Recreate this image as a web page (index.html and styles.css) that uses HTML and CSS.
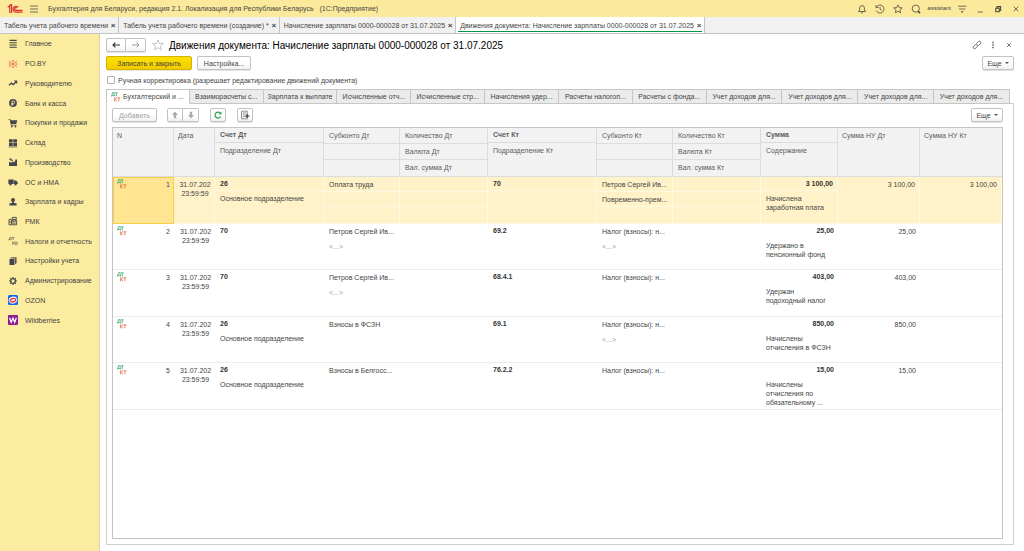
FILE: index.html
```html
<!DOCTYPE html>
<html lang="ru">
<head>
<meta charset="utf-8">
<title>Движения документа: Начисление зарплаты</title>
<link rel="stylesheet" href="styles.css">
</head>
<body>
<svg class="defs" aria-hidden="true">
  <symbol id="dtkt" viewBox="0 0 10 10">
    <path d="M.5 4.5V3.6h.4L1.6.6h1.6v3h.5v.9M.9 3.6h2.3" fill="none" stroke="#3fa873" stroke-width=".8"/>
    <path d="M4 .8h2.6M5.3.8v3.4" fill="none" stroke="#3fa873" stroke-width=".8"/>
    <path d="M3.6 5.4v3.9M6 5.4 4 7.3l2.1 2M6.4 5.8H9.4M7.9 5.8v3.5" fill="none" stroke="#e5683f" stroke-width=".8"/>
  </symbol>
</svg>
<header class="titlebar">
  <svg class="logo" viewBox="0 0 16 10"><g fill="none" stroke="#d9312b" stroke-width="1.2"><path d="M.8 3.4 2.8 1.6V9M4.6 9V.8L2.4 1.2"/><path d="M11.3 3.2A3 3 0 1 0 8.6 8.2H15.5"/><path d="M9.9 4A1.4 1.4 0 1 0 8.7 6.4H15.5"/></g></svg>
  <button class="icon-btn" aria-label="Меню"><svg viewBox="0 0 10 10"><path d="M1 2h8M1 5h8M1 8h8"/></svg></button>
  <h1 class="app-title">Бухгалтерия для Беларуси, редакция 2.1. Локализация для Республики Беларусь &nbsp; (1С:Предприятие)</h1>
  <div class="title-tools">
    <button class="icon-btn" aria-label="Уведомления"><svg viewBox="0 0 10 10"><path d="M1.4 7.5h7.2L7.4 6V4A2.4 2.4 0 0 0 2.6 4v2zM4 8.8h2"/></svg></button>
    <button class="icon-btn" aria-label="История"><svg viewBox="0 0 10 10"><path d="M1.4 3.3A4 4 0 1 1 1.3 6.6M1 1v2.5h2.4M5 2.8V5.2L6.8 6.4"/></svg></button>
    <button class="icon-btn" aria-label="Избранное"><svg viewBox="0 0 10 10"><path d="m5 .9 1.2 2.7 3 .3-2.3 2 .7 2.9L5 7.3 2.4 8.8l.7-2.9-2.3-2 3-.3z"/></svg></button>
    <button class="icon-btn" aria-label="Поиск"><svg viewBox="0 0 10 10"><circle cx="4.8" cy="4.6" r="3.6"/><path d="m7 7 2 2.2" stroke-width="1.6"/></svg></button>
    <span class="user">assistant</span>
    <button class="icon-btn" aria-label="Настройки"><svg viewBox="0 0 10 10"><path d="M1 2.2h8.4M2 5h6.4"/><path d="M3.6 7.2h3L5.1 8.9z" fill="#4d4c3e" stroke="none"/></svg></button>
    <button class="icon-btn" aria-label="Свернуть"><svg viewBox="0 0 10 10"><path d="M2.8 8h5"/></svg></button>
    <button class="icon-btn" aria-label="Восстановить"><svg viewBox="0 0 10 10"><path d="M2.8 4.2h3.4v3.6H2.8zM4 4V2.6h3.6v3.8H6.4" stroke-width="1.1"/></svg></button>
    <button class="icon-btn" aria-label="Закрыть"><svg viewBox="0 0 10 10"><path d="m2.6 2.6 4.8 4.8m0-4.8L2.6 7.4"/></svg></button>
  </div>
</header>
<nav class="window-tabs" aria-label="Окна">
  <div class="wtab"><a href="#">Табель учета рабочего времени</a><button aria-label="Закрыть">×</button></div>
  <div class="wtab"><a href="#">Табель учета рабочего времени (создание) *</a><button aria-label="Закрыть">×</button></div>
  <div class="wtab"><a href="#">Начисление зарплаты 0000-000028 от 31.07.2025</a><button aria-label="Закрыть">×</button></div>
  <div class="wtab wtab-active"><a href="#">Движения документа: Начисление зарплаты 0000-000028 от 31.07.2025</a><button aria-label="Закрыть">×</button></div>
</nav>
<div class="workspace">
  <nav class="sidebar" aria-label="Разделы">
    <ul>
      <li><a href="#"><svg viewBox="0 0 10 10"><path d="M1.5 1.4h7.2M1.5 3.7h7.2M1.5 6h7.2M1.5 8.3h7.2" stroke="#46463f" stroke-width="1.1"/></svg>Главное</a></li>
      <li><a href="#"><svg viewBox="0 0 10 10"><path d="M5 1v2.2M5 6.8V9M1.2 2.2 3.5 4M8.8 2.2 6.5 4M1.2 7.8 3.5 6M8.8 7.8 6.5 6M.6 5h1.8M7.6 5h1.8" stroke="#e2554a"/><circle cx="5" cy="5" r="1" fill="#e2554a"/></svg>PO.BY</a></li>
      <li><a href="#"><svg viewBox="0 0 10 10"><path d="m1 7.3 2.4-2.2 2 1.5L8 3.7" fill="none" stroke="#46464e" stroke-width="1.4"/><path d="M5.8 2.6h3.4V6z" fill="#46464e"/></svg>Руководителю</a></li>
      <li><a href="#"><svg viewBox="0 0 10 10"><circle cx="5" cy="5" r="3.9" fill="#46464e"/><path d="M4.1 7.8V2.9h1.3a1.3 1.3 0 0 1 0 2.7H3.2M3.2 6.7h2.4" fill="none" stroke="#fbec9f" stroke-width=".8"/></svg>Банк и касса</a></li>
      <li><a href="#"><svg viewBox="0 0 10 10"><path d="M.6 1.3h1.7l.5 1H9.3L8.2 6H3.4l.2.8h4.8v.7H2.9L1.8 2H.6z" fill="#46464e"/><circle cx="3.8" cy="8.5" r=".9" fill="#46464e"/><circle cx="7.5" cy="8.5" r=".9" fill="#46464e"/></svg>Покупки и продажи</a></li>
      <li><a href="#"><svg viewBox="0 0 10 10"><path d="M1 1.3h3.7v3.2H1zM5.3 1.3H9v3.2H5.3zM1 5.1h3.7v3.2H1zM5.3 5.1H9v3.2H5.3z" fill="#46464e"/><path d="M.6 9h8.8" stroke="#46464e" stroke-width=".6"/></svg>Склад</a></li>
      <li><a href="#"><svg viewBox="0 0 10 10"><path d="M1 9V4.6l1.8 1.2 2.4-1.6v1.4l2-1.4V2.6H9V9zM1.2 1.4h2.3v1.4H5v1H2.5V2.7H1.2z" fill="#46464e"/></svg>Производство</a></li>
      <li><a href="#"><svg viewBox="0 0 10 10"><path d="M.4 2.4h5.3v4.7H.4zM6.1 3.5h2L9.7 5.3v1.8H6.1z" fill="#46464e"/><circle cx="2.5" cy="7.4" r="1.1" fill="#46464e"/><circle cx="7.6" cy="7.4" r="1.1" fill="#46464e"/></svg>ОС и НМА</a></li>
      <li><a href="#"><svg viewBox="0 0 10 10"><circle cx="5" cy="3" r="2" fill="#46464e"/><path d="M4.1 4.5h1.8v1.2l2.7.9V8.6H1.4v-2l2.7-.9z" fill="#46464e"/></svg>Зарплата и кадры</a></li>
      <li><a href="#"><svg viewBox="0 0 10 10"><path d="M1 3.4h2.4v5.4H1zM4 4.2h4.6v4.6H4zM4.3 1.4h4v2h-4z" fill="none" stroke="#46464e" stroke-width=".9"/><path d="M4.8 5.6h3M4.8 7.2h3M1 6h2.4" stroke="#46464e" stroke-width=".8"/></svg>РМК</a></li>
      <li><a href="#"><svg viewBox="0 0 10 10"><path d="M1 4.2 2 1.4h1.2v2.2M.7 3.7h2.8M4 1.6h2.4M5.2 1.6v2.3M4.6 5.6v3M6.3 5.6 4.8 7l1.6 1.5M6.8 6.2h2.4v2.2H7z" fill="none" stroke="#77735c" stroke-width=".8"/></svg>Налоги и отчетность</a></li>
      <li><a href="#"><svg viewBox="0 0 10 10"><path d="M1.5 3h5v6h-5z" fill="#46464e"/><path d="M2 2.5 3.4 1.2H8.6V7L7 8.6V2.5z" fill="#5c5b59"/></svg>Настройки учета</a></li>
      <li><a href="#"><svg viewBox="0 0 10 10"><circle cx="5" cy="5" r="2.3" fill="none" stroke="#46464e" stroke-width="1.3"/><path d="M5 1v1.5M5 7.5V9M1 5h1.5M7.5 5H9M2.2 2.2l1 1M6.8 6.8l1 1M7.8 2.2l-1 1M3.2 6.8l-1 1" stroke="#46464e" stroke-width="1.2"/></svg>Администрирование</a></li>
      <li><a href="#"><svg viewBox="0 0 10 10"><rect width="10" height="10" rx="1.5" fill="#1766e8"/><ellipse cx="5" cy="5.1" rx="4.3" ry="3.4" fill="#fff" transform="rotate(-15 5 5)"/><ellipse cx="5" cy="5.2" rx="2.8" ry="1.6" fill="none" stroke="#e7343f" stroke-width="1.4" transform="rotate(-15 5 5)"/></svg>OZON</a></li>
      <li><a href="#"><svg viewBox="0 0 10 10"><rect width="10" height="10" rx="1" fill="#8e1b94"/><path d="m1.6 2.8 1.6 4.5L5 3l1.7 4.3 1.7-4.5" fill="none" stroke="#fff" stroke-width="1.2"/></svg>Wildberries</a></li>
    </ul>
  </nav>
  <main class="form">
    <div class="form-head">
      <div class="btn-pair">
        <button class="btn" aria-label="Назад"><svg viewBox="0 0 10 10"><path d="M9 5H2M4.4 2.6 2 5l2.4 2.4" fill="none" stroke="#333" stroke-width="1.2"/></svg></button>
        <button class="btn" aria-label="Вперед"><svg viewBox="0 0 10 10"><path d="M1 5h7M5.6 2.6 8 5 5.6 7.4" fill="none" stroke="#999"/></svg></button>
      </div>
      <button class="star" aria-label="В избранное"><svg viewBox="0 0 12 12"><path d="m6 .8 1.4 3.6 3.9.2-3 2.4 1 3.8L6 8.7l-3.3 2.1 1-3.8-3-2.4 3.9-.2z" fill="none" stroke="#b5b5b5" stroke-width=".8"/></svg></button>
      <h2>Движения документа: Начисление зарплаты 0000-000028 от 31.07.2025</h2>
      <div class="head-tools">
        <button class="icon-btn" aria-label="Ссылка"><svg viewBox="0 0 10 10"><path d="M4.6 3.6 6.4 1.7a1.4 1.4 0 0 1 2 2L6.5 5.5a1.4 1.4 0 0 1-1.9 0M5.4 6.4 3.6 8.3a1.4 1.4 0 0 1-2-2L3.5 4.5a1.4 1.4 0 0 1 1.9 0"/></svg></button>
        <button class="icon-btn" aria-label="Еще"><svg viewBox="0 0 10 10"><path d="M5 1.8v1.5M5 4.3v1.5M5 6.8v1.5" stroke-width="1.3"/></svg></button>
        <button class="icon-btn" aria-label="Закрыть"><svg viewBox="0 0 10 10"><path d="m3.2 3.2 3.6 3.6m0-3.6L3.2 6.8"/></svg></button>
      </div>
    </div>
    <div class="commands">
      <button class="btn btn-primary">Записать и закрыть</button>
      <button class="btn btn-settings">Настройка...</button>
      <button class="btn btn-more">Еще <span class="caret"></span></button>
    </div>
    <label class="manual"><input type="checkbox">Ручная корректировка (разрешает редактирование движений документа)</label>
    <div class="page-tabs" role="tablist">
      <button class="ptab ptab-active" role="tab" aria-selected="true"><svg class="dk"><use href="#dtkt"/></svg>Бухгалтерский и ...</button>
      <button class="ptab" role="tab">Взаиморасчеты с...</button>
      <button class="ptab" role="tab">Зарплата к выплате</button>
      <button class="ptab" role="tab">Исчисленные отч...</button>
      <button class="ptab" role="tab">Исчисленные стр...</button>
      <button class="ptab" role="tab">Начисления удер...</button>
      <button class="ptab" role="tab">Расчеты налогоп...</button>
      <button class="ptab" role="tab">Расчеты с фонда...</button>
      <button class="ptab ptab-wide" role="tab">Учет доходов для...</button>
      <button class="ptab ptab-wide" role="tab">Учет доходов для...</button>
      <button class="ptab ptab-wide" role="tab">Учет доходов для...</button>
      <button class="ptab ptab-wide" role="tab">Учет доходов для...</button>
    </div>
    <section class="pane">
      <div class="pane-tools">
        <button class="btn btn-add" disabled>Добавить</button>
        <div class="btn-pair btn-move">
          <button class="btn" aria-label="Вверх"><svg viewBox="0 0 10 10"><path d="M5 1.5 8 5H6.2v3.2H3.8V5H2z" fill="#a3acb4"/></svg></button>
          <button class="btn" aria-label="Вниз"><svg viewBox="0 0 10 10"><path d="M5 8.5 8 5H6.2V1.8H3.8V5H2z" fill="#a3acb4"/></svg></button>
        </div>
        <button class="btn btn-icon" aria-label="Обновить"><svg viewBox="0 0 10 10"><path d="M7.7 6.5A3 3 0 1 1 7.4 3.2" fill="none" stroke="#2ca24a" stroke-width="1.2"/><path d="M8.5 1.4v3H5.6z" fill="#2ca24a"/></svg></button>
        <button class="btn btn-icon" aria-label="Настройка списка"><svg viewBox="0 0 10 10"><path d="M1.5 1.2h5.8v7.6H1.5zM2.8 3h3.4M2.8 4.8h2M2.8 6.6h2" fill="none" stroke="#777" stroke-width=".8"/><path d="M5 6h4.5M7 4v4" stroke="#333"/></svg></button>
        <button class="btn btn-more">Еще <span class="caret"></span></button>
      </div>
      <div class="grid-box">
        <table>
          <colgroup><col class="c-n"><col class="c-date"><col class="c-acc"><col class="c-sub"><col class="c-qty"><col class="c-acc"><col class="c-sub"><col class="c-qty"><col class="c-sum"><col class="c-nu"><col class="c-nu"></colgroup>
          <thead>
            <tr>
              <th>N</th>
              <th>Дата</th>
              <th class="two"><b>Счет Дт</b><span>Подразделение Дт</span></th>
              <th class="three"><span>Субконто Дт</span><span></span><span></span></th>
              <th class="three"><span>Количество Дт</span><span>Валюта Дт</span><span>Вал. сумма Дт</span></th>
              <th class="two"><b>Счет Кт</b><span>Подразделение Кт</span></th>
              <th class="three"><span>Субконто Кт</span><span></span><span></span></th>
              <th class="three"><span>Количество Кт</span><span>Валюта Кт</span><span>Вал. сумма Кт</span></th>
              <th class="two"><b>Сумма</b><span>Содержание</span></th>
              <th>Сумма НУ Дт</th>
              <th>Сумма НУ Кт</th>
            </tr>
          </thead>
          <tbody>
            <tr class="selected">
              <td class="num"><div><svg class="dk"><use href="#dtkt"/></svg>1</div></td>
              <td class="date">31.07.202<br>23:59:59</td>
              <td class="two"><b>26</b><span>Основное подразделение</span></td>
              <td class="three"><span>Оплата труда</span><span></span><span></span></td>
              <td class="three"><span></span><span></span><span></span></td>
              <td class="two"><b>70</b><span></span></td>
              <td class="three"><span>Петров Сергей Ив...</span><span>Повременно-прем...</span><span></span></td>
              <td class="three"><span></span><span></span><span></span></td>
              <td class="two sum"><b>3 100,00</b><span>Начислена<br>заработная плата</span></td>
              <td class="nu">3 100,00</td>
              <td class="nu">3 100,00</td>
            </tr>
            <tr>
              <td class="num"><div><svg class="dk"><use href="#dtkt"/></svg>2</div></td>
              <td class="date">31.07.202<br>23:59:59</td>
              <td class="two"><b>70</b><span></span></td>
              <td class="three"><span>Петров Сергей Ив...</span><span class="empty">&lt;...&gt;</span><span></span></td>
              <td></td>
              <td class="two"><b>69.2</b><span></span></td>
              <td class="three"><span>Налог (взносы): н...</span><span class="empty">&lt;...&gt;</span><span></span></td>
              <td></td>
              <td class="two sum"><b>25,00</b><span>Удержано в<br>пенсионный фонд</span></td>
              <td class="nu">25,00</td>
              <td></td>
            </tr>
            <tr>
              <td class="num"><div><svg class="dk"><use href="#dtkt"/></svg>3</div></td>
              <td class="date">31.07.202<br>23:59:59</td>
              <td class="two"><b>70</b><span></span></td>
              <td class="three"><span>Петров Сергей Ив...</span><span class="empty">&lt;...&gt;</span><span></span></td>
              <td></td>
              <td class="two"><b>68.4.1</b><span></span></td>
              <td class="three"><span>Налог (взносы): н...</span><span></span><span></span></td>
              <td></td>
              <td class="two sum"><b>403,00</b><span>Удержан<br>подоходный налог</span></td>
              <td class="nu">403,00</td>
              <td></td>
            </tr>
            <tr>
              <td class="num"><div><svg class="dk"><use href="#dtkt"/></svg>4</div></td>
              <td class="date">31.07.202<br>23:59:59</td>
              <td class="two"><b>26</b><span>Основное подразделение</span></td>
              <td class="three"><span>Взносы в ФСЗН</span><span></span><span></span></td>
              <td></td>
              <td class="two"><b>69.1</b><span></span></td>
              <td class="three"><span>Налог (взносы): н...</span><span class="empty">&lt;...&gt;</span><span></span></td>
              <td></td>
              <td class="two sum"><b>850,00</b><span>Начислены<br>отчисления в ФСЗН</span></td>
              <td class="nu">850,00</td>
              <td></td>
            </tr>
            <tr>
              <td class="num"><div><svg class="dk"><use href="#dtkt"/></svg>5</div></td>
              <td class="date">31.07.202<br>23:59:59</td>
              <td class="two"><b>26</b><span>Основное подразделение</span></td>
              <td class="three"><span>Взносы в Белгосс...</span><span></span><span></span></td>
              <td></td>
              <td class="two"><b>76.2.2</b><span></span></td>
              <td class="three"><span>Налог (взносы): н...</span><span></span><span></span></td>
              <td></td>
              <td class="two sum"><b>15,00</b><span>Начислены<br>отчисления по<br>обязательному ...</span></td>
              <td class="nu">15,00</td>
              <td></td>
            </tr>
          </tbody>
        </table>
      </div>
    </section>
  </main>
</div>
</body>
</html>
```

FILE: styles.css
```css
* { box-sizing: border-box; }
body {
  margin: 0;
  min-height: 100vh;
  display: flex;
  flex-direction: column;
  font: 7px/9px "Liberation Sans", Arial, sans-serif;
  color: #444;
  background: #fff;
}
button { font: inherit; color: inherit; padding: 0; border: 0; background: none; white-space: nowrap; }
a { color: inherit; text-decoration: none; }
svg { display: block; flex: none; }
.defs { position: absolute; width: 0; height: 0; }
.dk { width: 10px; height: 10px; }

.icon-btn svg { width: 10px; height: 10px; fill: none; stroke: #4d4c3e; stroke-width: .8; }

.titlebar { display: flex; align-items: center; height: 17px; padding: 0 3px 0 6px; background: #fbea9c; }
.logo { width: 18px; height: 10px; margin-right: 5px; }
.app-title { margin: 0 0 0 9px; font-size: 7px; font-weight: 400; white-space: nowrap; }
.title-tools { display: flex; align-items: center; gap: 8px; margin-left: auto; }
.user { font-size: 6px; margin: 0 -2px; }

.window-tabs { display: flex; height: 17px; background: #f1f1f1; border-bottom: 1px solid #c4c4c4; }
.wtab { display: flex; align-items: center; gap: 2px; padding: 0 2px 0 4px; border-right: 1px solid #c4c4c4; white-space: nowrap; }
.wtab button { width: 6px; font-size: 8px; font-weight: 700; }
.wtab-active { background: linear-gradient(#009646, #009646) 2px 14px / calc(100% - 4px) 1px no-repeat #fff; }

.workspace { flex: 1; display: flex; }
.sidebar { width: 100px; flex: none; background: #fbec9f; border-right: 1px solid #d9d2ac; }
.sidebar ul { display: flex; flex-direction: column; height: 296px; margin: 0; padding: 0; list-style: none; }
.sidebar li { flex: 1; display: flex; align-items: center; }
.sidebar a { display: flex; align-items: center; gap: 7px; padding-left: 8px; white-space: nowrap; }
.sidebar svg { width: 10px; height: 10px; }

.form { flex: 1; min-width: 0; display: flex; flex-direction: column; padding: 4px 10px 6px 6px; }
.btn {
  height: 14px;
  border: 1px solid #c2c2c2;
  border-radius: 2px;
  background: linear-gradient(#fff 50%, #f1f1f1);
  box-shadow: 0 1px 0 #e4e4e4;
  display: flex;
  align-items: center;
  justify-content: center;
}
.btn svg { width: 10px; height: 10px; }
.btn-pair { display: flex; }
.btn-pair .btn { width: 20px; }
.btn-pair .btn:first-child { border-radius: 2px 0 0 2px; }
.btn-pair .btn:last-child { border-radius: 0 2px 2px 0; border-left: 0; }
.form-head { display: flex; align-items: center; height: 14px; }
.star { margin: 0 5px 0 6px; }
.star svg { width: 12px; height: 12px; }
h2 { margin: 0; font-size: 10px; line-height: 13px; font-weight: 400; color: #000; white-space: nowrap; }
.head-tools { display: flex; gap: 6px; margin-left: auto; }
.commands { display: flex; gap: 5px; margin-top: 4px; }
.btn-primary { width: 86px; background: linear-gradient(#fbe000, #f2cc00); border-color: #d3b200; }
.btn-settings { width: 54px; }
.btn-more { width: 32px; gap: 3px; margin-left: auto; }
.caret { border: 2px solid transparent; border-top-color: #555; border-bottom: 0; }
.manual { display: flex; align-items: center; gap: 3px; height: 10px; margin-top: 5px; }
.manual input { appearance: none; width: 8px; height: 8px; margin: 0 0 0 1px; border: 1px solid #b0b0b0; border-radius: 1px; background: #fff; }

.page-tabs { display: flex; margin: 4px 4px 0 0; z-index: 1; }
.ptab { flex: 74 1 0; min-width: 0; height: 15px; overflow: hidden; background: #ebebeb; border: 1px solid #c6c6c6; border-left: 0; }
.ptab-wide { flex-grow: 76; }
.ptab-active { flex-grow: 79; display: flex; align-items: center; gap: 2px; padding-left: 4px; background: #fff; border-left: 1px solid #c6c6c6; border-bottom-color: #fff; }
.pane { flex: 1; display: flex; flex-direction: column; margin-top: -1px; padding: 4px 10px 5px 5px; border: 1px solid #cfcfcf; }
.pane-tools { display: flex; }
.btn-add { width: 45px; color: #a0a0a0; }
.btn-move { margin: 0 11px 0 10px; }
.btn-move .btn { width: 16px; }
.btn-icon { width: 16px; margin-right: 11px; }

.grid-box { flex: 1; margin-top: 5px; border: 1px solid #c4c4c4; }
table { width: 100%; table-layout: fixed; border-collapse: separate; border-spacing: 0; }
.c-n { width: 61px; }
.c-date { width: 41px; }
.c-acc { width: 109px; }
.c-sub { width: 76px; }
.c-qty { width: 88px; }
.c-sum { width: 77px; }
.c-nu { width: 82px; }
th, td { padding: 3px 4px 0; vertical-align: top; text-align: left; font-weight: 400; white-space: nowrap; }
th { height: 49px; color: #5c5c5c; background: #f2f2f2; border-right: 1px solid #dcdcdc; border-bottom: 1px solid #dcdcdc; }
th:last-child { border-right: 0; }
td { height: 46px; border-bottom: 1px solid #ececec; }
tr:nth-child(odd) > td { height: 47px; }
.two, .three { padding: 0; }
.two > *, .three > * { display: block; padding: 2px 4px 0 5px; }
.two > b { height: 14px; }
.two > span { padding-top: 3px; }
.three > * { height: 15px; padding-top: 3px; }
th.two > b { height: 15px; border-bottom: 1px solid #dcdcdc; }
th.three > * { height: 16px; padding-top: 3px; border-bottom: 1px solid #dcdcdc; }
th.three > :last-child { border-bottom: 0; }
td.two > b { color: #333; }
.num div { display: flex; justify-content: space-between; }
.num .dk { margin-top: -1px; }
td.date { padding: 3px 2px 0 4px; text-align: center; }
.sum > b, .nu { text-align: right; }
.empty { color: #999; }
.selected td { background: #fff2c8; border-right: 1px solid #fff9e4; border-bottom-color: #fff9e4; }
.selected .two > b { border-bottom: 1px solid #fff9e4; }
.selected .three > * { border-bottom: 1px solid #fff9e4; }
.selected .three > :last-child { border-bottom: 0; }
.selected .num { padding: 2px 3px 0; background: #ffe591; border: 1px solid #f9cf47; }
```
